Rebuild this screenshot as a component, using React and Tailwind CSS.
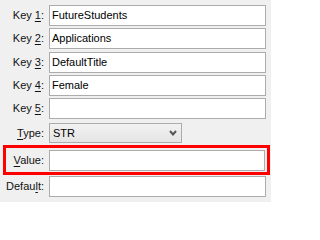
import React from 'react'

const font = { fontFamily: '"Liberation Sans", Arial, sans-serif' }

function Label({ text, u, width = 'w-[44px]' }) {
    // underline the access key letter at index u
    return (
        <div className={`${width} shrink-0 text-right pr-0`}>
            {text.slice(0, u)}
            <span className="underline underline-offset-[2px]">{text[u]}</span>
            {text.slice(u + 1)}
        </div>
    )
}

function Field({ value }) {
    return (
        <div className="ml-[5px] w-[217px] h-[21px] bg-white border border-[#acacac] flex items-center pl-[2px] text-black">
            {value}
        </div>
    )
}

export default function App() {
    return (
        <div className="w-[271px] h-[202px] bg-[#f0f0f0] text-[11px] text-[#111] overflow-hidden" style={font}>
            <div className="flex flex-col pt-[5px]">
                <div className="flex items-center h-[21px]">
                    <Label text="Key 1:" u={4} />
                    <Field value="FutureStudents" />
                </div>
                <div className="flex items-center h-[21px] mt-[2px]">
                    <Label text="Key 2:" u={4} />
                    <Field value="Applications" />
                </div>
                <div className="flex items-center h-[21px] mt-[3px]">
                    <Label text="Key 3:" u={4} />
                    <Field value="DefaultTitle" />
                </div>
                <div className="flex items-center h-[21px] mt-[2px]">
                    <Label text="Key 4:" u={4} />
                    <Field value="Female" />
                </div>
                <div className="flex items-center h-[21px] mt-[2px]">
                    <Label text="Key 5:" u={4} />
                    <Field value="" />
                </div>

                {/* Type select */}
                <div className="flex items-center h-[20px] mt-[4px]">
                    <Label text="Type:" u={0} />
                    <div className="ml-[5px] w-[133px] h-[20px] border border-[#acacac] bg-gradient-to-b from-[#f2f2f2] to-[#e5e5e5] flex items-center justify-between pl-[3px] pr-[4px] text-black">
                        <span>STR</span>
                        <svg width="8" height="6" viewBox="0 0 8 6">
                            <path d="M1 1 L4 4.5 L7 1" fill="none" stroke="#555" strokeWidth="2" />
                        </svg>
                    </div>
                </div>

                {/* highlighted value row */}
                <div className="flex items-start ml-[3px] mt-[2px] w-[267px] h-[30px] border-[3px] border-[#ff0000] pt-[2px]">
                    <div className="flex items-center h-[21px]">
                        <Label text="Value:" u={0} width="w-[38px]" />
                        <div className="ml-[5px] w-[216px] h-[21px] bg-white border border-[#acacac]" />
                    </div>
                </div>

                <div className="flex items-center h-[21px] mt-[1px]">
                    <Label text="Default:" u={5} />
                    <Field value="" />
                </div>
            </div>
        </div>
    )
}
